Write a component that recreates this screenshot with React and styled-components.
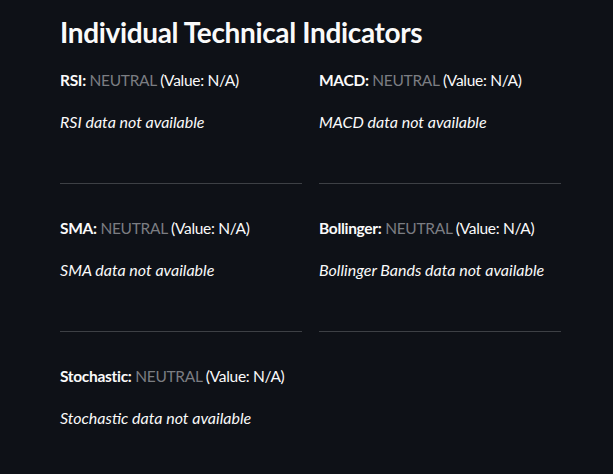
import React from "react";
import styled, { createGlobalStyle } from "styled-components";

const Global = createGlobalStyle`
  html, body {
    margin: 0;
    padding: 0;
    background: #0e1117;
    overflow: hidden;
  }
  body {
    font-family: Lato, "Noto Sans", sans-serif;
    color: #fafafa;
  }
`;

const Page = styled.div`
  width: 613px;
  height: 474px;
  background: #0e1117;
  padding: 16px 0 0 60px;
  box-sizing: border-box;
`;

const Title = styled.h3`
  margin: 0 0 17px 0;
  font-size: 28px;
  font-weight: 700;
  line-height: 1.2;
  letter-spacing: -0.35px;
  color: #fafafa;
`;

const Grid = styled.div`
  display: grid;
  grid-template-columns: 242px 242px;
  column-gap: 17px;
`;

const Cell = styled.div`
  display: flex;
  flex-direction: column;
`;

const Line = styled.p`
  margin: 0 0 16px 0;
  font-size: ${(p) => (p.$italic ? "16px" : "15.5px")};
  letter-spacing: ${(p) => (p.$italic ? "0" : "-0.3px")};
  line-height: 26px;
  font-style: ${(p) => (p.$italic ? "italic" : "normal")};
  white-space: nowrap;
`;

const Label = styled.strong`
  font-weight: 700;
`;

const Signal = styled.span`
  color: #7b7d82;
`;

const Divider = styled.hr`
  margin: 32px 0 31px 0;
  border: none;
  height: 1px;
  background: #3d4045;
`;

const indicators = [
  { name: "RSI", text: "RSI data not available" },
  { name: "MACD", text: "MACD data not available" },
  { name: "SMA", text: "SMA data not available" },
  { name: "Bollinger", text: "Bollinger Bands data not available" },
  { name: "Stochastic", text: "Stochastic data not available", last: true },
];

export default function App() {
  return (
    <Page>
      <Global />
      <Title>Individual Technical Indicators</Title>
      <Grid>
        {indicators.map((ind) => (
          <Cell key={ind.name}>
            <Line>
              <Label>{ind.name}:</Label> <Signal>NEUTRAL</Signal> (Value: N/A)
            </Line>
            <Line $italic>{ind.text}</Line>
            {!ind.last && <Divider />}
          </Cell>
        ))}
      </Grid>
    </Page>
  );
}
